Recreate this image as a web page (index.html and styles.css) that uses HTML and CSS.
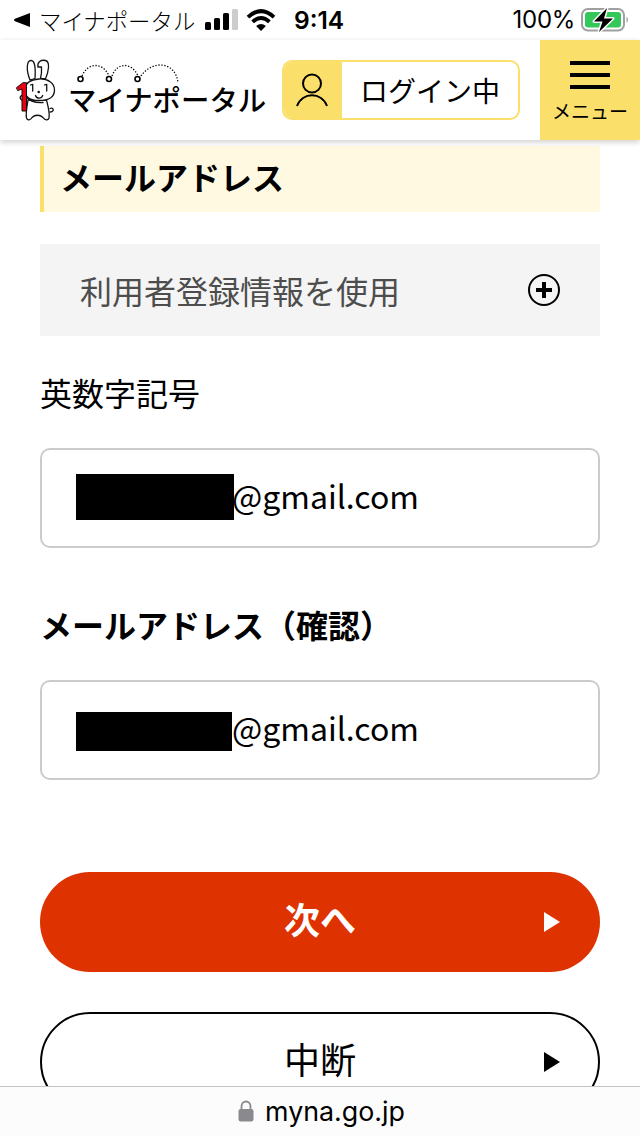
FILE: index.html
```html
<!DOCTYPE html>
<html lang="ja">
<head>
<meta charset="UTF-8">
<title>マイナポータル</title>
<meta name="viewport" content="width=device-width, initial-scale=1.0">
<link rel="stylesheet" href="styles.css">
</head>
<body>
	<div class="screen">
		<!-- status bar -->
		<div class="status">
			<svg class="status-back" width="16" height="14" viewBox="0 0 16 14"><path d="M16 0v14L1 8.2Q-1 7 1 5.8z"/></svg>
			<span class="status-app">マイナポータル</span>
			<svg class="status-signal" width="34" height="22" viewBox="0 0 34 22">
				<rect x="0" y="13" width="6" height="8" rx="1.5"/>
				<rect x="9" y="9" width="6" height="12" rx="1.5"/>
				<rect x="18" y="4" width="6" height="17" rx="1.5"/>
				<rect x="27" y="0" width="6" height="21" rx="1.5" fill="#ccc"/>
			</svg>
			<svg class="status-wifi" width="30" height="22" viewBox="0 0 30 22">
				<path d="M2 8.2Q15-4 28 8.2M6.6 12.9Q15 5.2 23.4 12.9" fill="none" stroke="#000" stroke-width="3.9"/>
				<path d="M15 22l-4.900-4.900q4.900-4 9.800 0z"/>
			</svg>
			<span class="status-time">9:14</span>
			<span class="status-percent">100%</span>
			<svg class="status-battery" width="48" height="26" viewBox="0 0 48 26">
				<rect x="1" y="2" width="42" height="21.500" rx="6" fill="#fff" stroke="#a0a0a0" stroke-width="2"/>
				<rect x="4" y="5" width="36" height="15.500" rx="3" fill="#34c759"/>
				<path d="M45.500 9.500q3 3 0 6.500z" fill="#a0a0a0"/>
				<path d="M26 1L13 14.500h8.500L18 25 32 11.500h-9z" stroke="#fff" stroke-width="3" stroke-linejoin="round" paint-order="stroke"/>
			</svg>
		</div>

		<!-- site header -->
		<header class="header">
			<svg class="rabbit" width="40" height="64" viewBox="0 0 40 64" fill="#fff" stroke="#111" stroke-width="1.300" stroke-linejoin="round" stroke-linecap="round">
				<path d="M14 22C10 12 10.500 2.500 15 2.500S19.500 12 19 20.500z"/>
				<path d="M24.500 20.500c1-4 1.300-7.500 1-11.500H22C21 4 25 1.500 29.500 2.500c5 1.300 3 11 0 18.500z"/>
				<path d="M34 50.500c4-1.500 4.500 3.500 0 3.500"/>
				<path d="M12 42c-1 6-2.500 14-1.500 18 1 3 4 2 5.500-.5 3-3 8-3 11 0 1.500 2.500 5 3.500 6 .5 1-5-1-12-2.500-18z"/>
				<path d="M23 21c9-.5 15.500 4 15.500 11S33 42.500 23 42.500 9 39 9 32 14 21.700 23 21z"/>
				<path d="M10 38.500c3 4 9 6.500 17 6" fill="none"/>
				<path d="M10 38c-2-1-4-1-5 0-2 2 0 5 5 5.500z"/>
				<path d="M.7 29.500L7 24.700h3.500V53H6V31l-4 1.500z" fill="#e60012" stroke-width="1"/>
				<path d="M14.500 27l2.200-.7V33M28.500 27l2.200-.7V33M19.500 37.500c1 3.500 6 3.500 7.200 0" fill="none"/>
				<circle cx="22.700" cy="34" r=".6" fill="#111"/>
			</svg>
			<div class="logo">
				<svg class="logo-arcs" width="110" height="30" viewBox="0 0 110 30" fill="none" stroke="#000">
					<g stroke-width="1.300" stroke-dasharray="1.300 1.700">
						<path d="M6 13C12-1 27-1 33 13"/>
						<path d="M36 13C41-1 56-1 62 13"/>
						<path d="M65 13C77-4 100-1 102 20"/>
					</g>
					<g stroke-width="1.600">
						<circle cx="4.500" cy="16" r="2.500"/>
						<circle cx="33" cy="16" r="2.500"/>
						<circle cx="61.500" cy="16" r="2.500"/>
					</g>
				</svg>
				<span class="logo-text">マイナポータル</span>
			</div>
			<div class="login">
				<span class="login-icon">
					<svg width="32" height="34" viewBox="0 0 32 34" fill="none" stroke="#000" stroke-width="2">
						<circle cx="16" cy="10.500" r="9"/>
						<path d="M1 33C6 18.800 26 18.800 31 33"/>
					</svg>
				</span>
				<span class="login-text">ログイン中</span>
			</div>
			<div class="menu">
				<span class="menu-line"></span>
				<span class="menu-line"></span>
				<span class="menu-line"></span>
				<span class="menu-text">メニュー</span>
			</div>
		</header>

		<!-- form -->
		<main class="content">
			<h2 class="heading">メールアドレス</h2>
			<div class="accordion">
				<span>利用者登録情報を使用</span>
				<svg width="32" height="32" viewBox="0 0 32 32">
					<circle cx="16" cy="16" r="15" fill="none" stroke="#000" stroke-width="2"/>
					<path d="M8 16h16M16 8v16" stroke="#000" stroke-width="4"/>
				</svg>
			</div>
			<div class="label">英数字記号</div>
			<div class="field">
				<span class="mask"></span>
				<span class="field-text">@gmail.com</span>
			</div>
			<div class="label label-confirm">メールアドレス（確認）</div>
			<div class="field field-confirm">
				<span class="mask mask-confirm"></span>
				<span class="field-text">@gmail.com</span>
			</div>
			<div class="button button-next">
				<span class="button-text">次へ</span>
				<svg class="button-arrow" width="16" height="20" viewBox="0 0 16 20"><path d="M0 0l16 10L0 20z"/></svg>
			</div>
			<div class="button button-stop">
				<span class="button-text">中断</span>
				<svg class="button-arrow" width="16" height="20" viewBox="0 0 16 20"><path d="M0 0l16 10L0 20z"/></svg>
			</div>
		</main>

		<!-- browser address bar -->
		<footer class="address">
			<svg width="16" height="22" viewBox="0 0 16 22">
				<path d="M3.500 10V6.500a4.500 5 0 0 1 9 0V10" fill="none" stroke="#8a8a8e" stroke-width="1.800"/>
				<rect x="0.500" y="9" width="15" height="12.500" rx="2.200" fill="#8a8a8e"/>
			</svg>
			<span>myna.go.jp</span>
		</footer>
	</div>
</body>
</html>
```
FILE: styles.css
```css
*
{
	box-sizing: border-box;
}

body
{
	margin: 0;
	padding: 0;
	color: #000;
	background-color: #fff;
	font-family: "Noto Sans CJK JP", sans-serif;
	font-size: 32px;
}

svg
{
	display: block;
	flex-shrink: 0;
	overflow: visible;
}

.screen
{
	display: flex;
	flex-direction: column;
	width: 640px;
	height: 1136px;
	overflow: hidden;
	white-space: nowrap;
}

/* status bar */
.status
{
	display: flex;
	align-items: center;
	flex: 0 0 40px;
	padding: 0 11px 0 14px;
	font-family: Inter, sans-serif;
	font-size: 24px;
	line-height: 40px;
}

.status-app
{
	width: 156px;
	margin: 0 10px 0 9px;
	font-family: "Noto Sans CJK JP", sans-serif;
	font-size: 22.4px;
	font-weight: 300;
	line-height: 36px;
}

.status-wifi
{
	margin-left: 7px;
}

.status-time
{
	margin-left: 18px;
	font-size: 24.5px;
	font-weight: 600;
}

.status-percent
{
	margin-left: auto;
	margin-right: 6px;
	letter-spacing: -0.3px;
}

/* site header */
.header
{
	display: flex;
	align-items: center;
	flex: 0 0 100px;
	position: relative;
	z-index: 1;
	padding-left: 16px;
	background-color: #fff;
	box-shadow: 0 2px 6px rgba(0,0,0,0.2);
}

.logo
{
	position: relative;
	width: 200px;
	margin-left: 12px;
	padding-top: 18px;
}

/* the dotted hops run above the letters */
.logo-arcs
{
	position: absolute;
	left: 8px;
	top: 2px;
}

.logo-text
{
	display: block;
	font-size: 28.4px;
	font-weight: 500;
	line-height: 40px;
}

.login
{
	display: flex;
	width: 238px;
	height: 60px;
	margin-left: 14px;
	border: 2px solid #fbdf6b;
	border-radius: 10px;
	overflow: hidden;
}

.login-icon
{
	display: flex;
	align-items: center;
	justify-content: center;
	width: 58px;
	padding-right: 2px;
	background-color: #fbdf6b;
}

.login-text
{
	padding-left: 18px;
	font-size: 28px;
	line-height: 56px;
}

.menu
{
	display: flex;
	flex-direction: column;
	align-items: center;
	width: 100px;
	height: 100px;
	margin-left: auto;
	padding-top: 21px;
	background-color: #fbdf6b;
}

.menu-line
{
	width: 40px;
	height: 4px;
	margin-bottom: 8px;
	background-color: #000;
}

.menu-text
{
	font-size: 19px;
	line-height: 28px;
}

/* form */
.content
{
	flex: 1;
	min-height: 0;
	padding: 6px 40px 0;
	overflow: hidden;
}

.heading
{
	height: 66px;
	margin: 0 0 32px;
	padding-left: 16px;
	border-left: 4px solid #fbdf6b;
	background-color: #fff9e2;
	font-size: 32px;
	font-weight: 700;
	line-height: 60px;
}

.accordion
{
	display: flex;
	align-items: center;
	justify-content: space-between;
	height: 92px;
	padding: 0 40px;
	background-color: #f4f4f4;
	color: #4d4d4d;
}

.label
{
	margin: 32px 0;
	line-height: 48px;
}

.label-confirm
{
	margin: 52px 0 32px;
	font-weight: 700;
}

.field
{
	display: flex;
	height: 100px;
	padding: 24px 34px 0;
	border: 2px solid #ccc;
	border-radius: 10px;
}

.field-confirm
{
	padding-top: 30px;
}

.mask
{
	width: 158px;
	height: 46px;
	background-color: #000;
}

.mask-confirm
{
	width: 156px;
	height: 39px;
}

.field-text
{
	margin-left: -2px;
	line-height: 42px;
}

.field-confirm .field-text
{
	margin-left: 0;
	line-height: 30px;
}

.button
{
	display: flex;
	align-items: center;
	height: 100px;
	margin-bottom: 40px;
	padding: 0 40px 0 56px;
	border-radius: 50px;
	font-size: 36px;
}

.button-text
{
	flex: 1;
	padding-bottom: 8px;
	text-align: center;
}

.button-next
{
	margin-top: 92px;
	background-color: #de3200;
	color: #fff;
	font-weight: 700;
}

.button-stop
{
	padding: 0 38px 0 54px;
	border: 2px solid #000;
}

.button-arrow
{
	fill: currentColor;
}

/* browser address bar */
.address
{
	display: flex;
	align-items: center;
	justify-content: center;
	flex: 0 0 50px;
	gap: 11px;
	padding: 0 0 1px 3px;
	border-top: 1px solid #c4c4c4;
	background-color: #fcfcfc;
	font-family: Inter, sans-serif;
	font-size: 26.800px;
}
```
